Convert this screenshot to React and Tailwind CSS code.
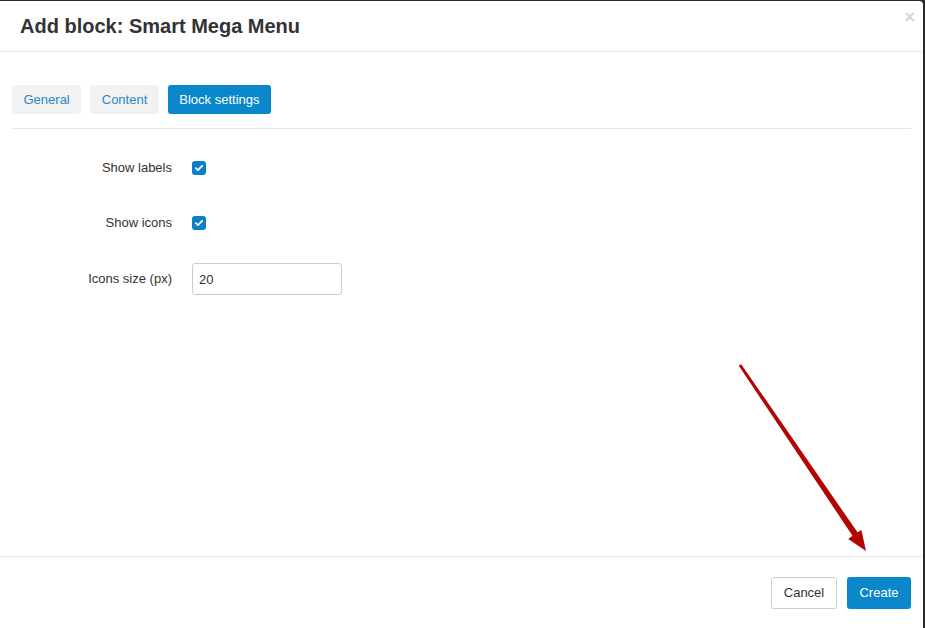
import React from 'react'

function Check() {
  return (
    <span className="flex h-[14px] w-[14px] items-center justify-center rounded-[3px] bg-[#0b7fc7]">
      <svg viewBox="0 0 12 12" className="h-[10px] w-[10px]">
        <path d="M2.2 6.2 L4.8 8.6 L9.8 3.4" fill="none" stroke="#fff" strokeWidth="2.2" strokeLinecap="round" strokeLinejoin="round" />
      </svg>
    </span>
  )
}

export default function App() {
  const tabs = ['General', 'Content', 'Block settings']
  return (
    <div className="h-[628px] w-[925px] bg-[#2a2a2a] pt-px font-['Liberation_Sans',Arial,sans-serif]">
      <div className="relative flex h-[627px] w-[923px] flex-col rounded-tr-[4px] bg-white">
        <div className="flex h-[51px] items-center border-b border-[#e5e5e5] px-5 pb-px">
          <h1 className="text-[20px] font-bold text-[#333]">Add block: Smart Mega Menu</h1>
          <span className="absolute right-[8px] top-[7px] text-[18px] font-bold leading-none text-[#d4d4d4]">×</span>
        </div>

        <div className="flex-1 px-3 pt-[33px]">
          <div className="flex gap-[9px] border-b border-[#e5e5e5] pb-[14px]">
            {tabs.map((t, i) => (
              <button
                key={t}
                className={
                  i === 2
                    ? 'h-[29px] rounded-[3px] bg-[#0a86ca] px-[11.5px] text-[13px] text-white'
                    : 'h-[29px] rounded-[3px] bg-[#f2f2f2] px-[11.5px] text-[13px] text-[#2a88c3]'
                }
              >
                {t}
              </button>
            ))}
          </div>

          <div className="mt-[31px] flex flex-col text-[13px] text-[#333]">
            <div className="flex h-[16px] items-center">
              <span className="w-[160px] text-right">Show labels</span>
              <span className="ml-5"><Check /></span>
            </div>
            <div className="mt-[39px] flex h-[16px] items-center">
              <span className="w-[160px] text-right">Show icons</span>
              <span className="ml-5"><Check /></span>
            </div>
            <div className="mt-[32px] flex items-center">
              <span className="w-[160px] text-right">Icons size (px)</span>
              <input
                defaultValue="20"
                className="ml-5 h-[32px] w-[150px] rounded-[3px] border border-[#ccc] px-[6px] text-[13px] text-[#333] outline-none"
              />
            </div>
          </div>
        </div>

        <div className="flex h-[72px] items-center justify-end gap-[10px] border-t border-[#e5e5e5] pr-3 pt-px">
          <button className="h-[32px] w-[66px] rounded-[3px] border border-[#ccc] bg-white text-[13px] text-[#333]">Cancel</button>
          <button className="h-[32px] w-[64px] rounded-[3px] bg-[#0a86ca] text-[13px] text-white">Create</button>
        </div>

        <svg className="pointer-events-none absolute left-0 top-0" width="923" height="627" viewBox="0 0 923 627">
          <polygon
            points="738.8,364.8 741.2,363.2 857.5,531.3 861.4,528.9 866,550 848.2,537.9 852.5,534.7"
            fill="#b30404"
          />
        </svg>
      </div>
    </div>
  )
}
